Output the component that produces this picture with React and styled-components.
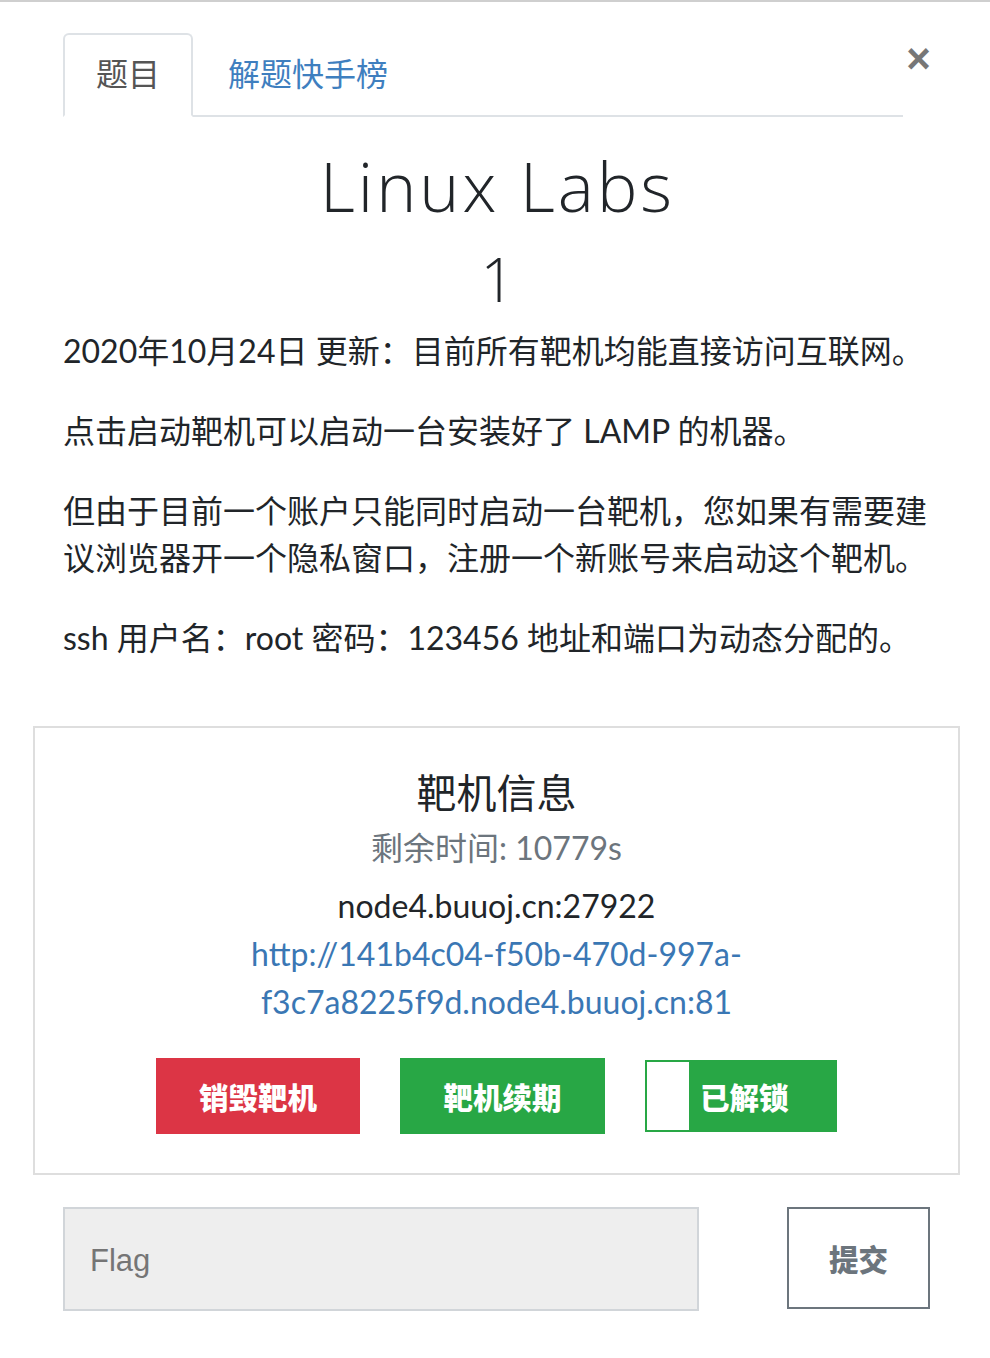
import React from "react";
import styled, { createGlobalStyle } from "styled-components";

const GlobalStyle = createGlobalStyle`
  body {
    margin: 0;
    background: #fff;
    font-family: "Lato", "Noto Sans CJK SC", sans-serif;
    color: #212529;
  }
`;

const Modal = styled.div`
  border-top: 2px solid #cfcfcf;
  padding: 31px 58px 40px 63px;
`;

const Header = styled.div`
  display: flex;
  align-items: flex-start;
`;

const Tabs = styled.ul`
  display: flex;
  flex: 1;
  margin: 0;
  padding: 0;
  list-style: none;
  border-bottom: 2px solid #dee2e6;
`;

const Tab = styled.li`
  box-sizing: border-box;
  height: 84px;
  margin-bottom: -2px;
  padding: 0 ${(p) => (p.$active ? 31 : 33)}px 6px;
  display: flex;
  align-items: center;
  font-size: 32px;
  color: ${(p) => (p.$active ? "#555" : "#3f7fbf")};
  border: 2px solid ${(p) => (p.$active ? "#dee2e6" : "transparent")};
  border-bottom-color: ${(p) => (p.$active ? "#fff" : "transparent")};
  border-radius: 6px 6px 0 0;
  background: ${(p) => (p.$active ? "#fff" : "transparent")};
`;

const Close = styled.button`
  border: none;
  background: none;
  padding: 0;
  margin: 5px 0 0 2px;
  width: 27px;
  font-family: "Liberation Sans", sans-serif;
  font-size: 42px;
  font-weight: bold;
  line-height: 42px;
  color: #777;
`;

const Title = styled.h1`
  margin: 29px 0 0;
  text-align: center;
  font-family: "Open Sans", sans-serif;
  font-weight: 300;
  font-size: 68px;
  letter-spacing: 3px;
  line-height: 80px;
  color: #212529;
`;

const Value = styled.h2`
  margin: 17px 0 12px;
  text-align: center;
  font-family: "Open Sans", sans-serif;
  font-weight: 300;
  font-size: 60px;
  line-height: 72px;
  color: #212529;
`;

const Text = styled.p`
  margin: 0 0 33px;
  font-size: 32px;
  line-height: 47px;
  color: #212529;
`;

const Panel = styled.div`
  margin: 65px -28px 0 -30px;
  border: 2px solid #dedede;
  padding: 37px 20px 39px;
  display: flex;
  flex-direction: column;
  align-items: center;
`;

const PanelTitle = styled.h3`
  margin: 0;
  font-size: 40px;
  font-weight: 400;
  line-height: 56px;
  color: #212529;
`;

const Remain = styled.div`
  margin-top: 1px;
  font-size: 32px;
  line-height: 52px;
  color: #6c757d;
`;

const Host = styled.div`
  margin-top: 8px;
  font-size: 32px;
  line-height: 48px;
`;

const Link = styled.a`
  text-align: center;
  font-size: 32px;
  line-height: 48px;
  color: #3a77b4;
  text-decoration: none;
`;

const Buttons = styled.div`
  margin-top: 32px;
  display: flex;
  gap: 40px;
  align-items: center;
`;

const Button = styled.button`
  width: ${(p) => p.$w}px;
  height: 76px;
  border: none;
  border-radius: 0;
  background: ${(p) => p.$bg};
  color: #fff;
  font-family: "Noto Sans CJK SC", sans-serif;
  font-size: 29.5px;
  font-weight: 900;
`;

const Unlock = styled.div`
  box-sizing: border-box;
  width: 192px;
  height: 72px;
  border: 2px solid #28a745;
  display: flex;
  background: #28a745;
`;

const Knob = styled.span`
  width: 42px;
  background: #fff;
`;

const UnlockText = styled.span`
  flex: 1;
  display: flex;
  align-items: center;
  padding-left: 11px;
  color: #fff;
  font-family: "Noto Sans CJK SC", sans-serif;
  font-size: 29.5px;
  font-weight: 900;
`;

const FlagRow = styled.div`
  margin-top: 32px;
  display: flex;
  justify-content: space-between;
  align-items: flex-start;
  padding-right: 2px;
`;

const FlagInput = styled.input`
  box-sizing: border-box;
  width: 636px;
  height: 104px;
  padding: 4px 25px 0;
  border: 2px solid #d1d5d9;
  background: #eee;
  font-family: "Liberation Sans", sans-serif;
  font-size: 31px;
  color: #555;
  &::placeholder {
    color: #757575;
  }
`;

const Submit = styled.button`
  box-sizing: border-box;
  width: 143px;
  height: 102px;
  border: 2px solid #6c757d;
  background: #fff;
  color: #6c757d;
  font-family: "Noto Sans CJK SC", sans-serif;
  font-size: 29.5px;
  font-weight: 900;
`;

export default function App() {
  return (
    <Modal>
      <GlobalStyle />
      <Header>
        <Tabs>
          <Tab $active>题目</Tab>
          <Tab>解题快手榜</Tab>
        </Tabs>
        <Close>×</Close>
      </Header>
      <Title>Linux Labs</Title>
      <Value>1</Value>
      <Text>2020年10月24日 更新：目前所有靶机均能直接访问互联网。</Text>
      <Text>点击启动靶机可以启动一台安装好了 LAMP 的机器。</Text>
      <Text>
        但由于目前一个账户只能同时启动一台靶机，您如果有需要建议浏览器开一个隐私窗口，注册一个新账号来启动这个靶机。
      </Text>
      <Text>ssh 用户名：root 密码：123456 地址和端口为动态分配的。</Text>
      <Panel>
        <PanelTitle>靶机信息</PanelTitle>
        <Remain>剩余时间: 10779s</Remain>
        <Host>node4.buuoj.cn:27922</Host>
        <Link href="#">
          http://141b4c04-f50b-470d-997a-
          <br />
          f3c7a8225f9d.node4.buuoj.cn:81
        </Link>
        <Buttons>
          <Button $w={204} $bg="#dc3545">销毁靶机</Button>
          <Button $w={205} $bg="#28a745">靶机续期</Button>
          <Unlock>
            <Knob />
            <UnlockText>已解锁</UnlockText>
          </Unlock>
        </Buttons>
      </Panel>
      <FlagRow>
        <FlagInput placeholder="Flag" />
        <Submit>提交</Submit>
      </FlagRow>
    </Modal>
  );
}
